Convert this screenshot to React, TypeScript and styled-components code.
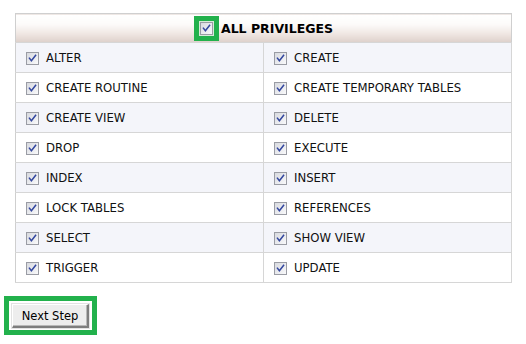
import styled, { createGlobalStyle } from "styled-components";

const privileges: [string, string][] = [
  ["ALTER", "CREATE"],
  ["CREATE ROUTINE", "CREATE TEMPORARY TABLES"],
  ["CREATE VIEW", "DELETE"],
  ["DROP", "EXECUTE"],
  ["INDEX", "INSERT"],
  ["LOCK TABLES", "REFERENCES"],
  ["SELECT", "SHOW VIEW"],
  ["TRIGGER", "UPDATE"],
];

const GlobalStyle = createGlobalStyle`
  body {
    margin: 0;
    background: #ffffff;
    font-family: "DejaVu Sans", Verdana, sans-serif;
  }
`;

const Page = styled.div`
  padding: 13px 0 0 4px;
`;

const Table = styled.table`
  margin-left: 11px;
  width: 497px;
  border-collapse: collapse;
  border: 1px solid #cfcfcf;
  table-layout: fixed;
`;

const HeaderCell = styled.th`
  height: 28px;
  padding: 0;
  background: linear-gradient(
    to bottom,
    #ffffff 0%,
    #fcfbfa 35%,
    #efe6e2 70%,
    #ddd0ca 100%
  );
  border-bottom: 1px solid #d6d6d6;
`;

const HeaderInner = styled.div`
  display: flex;
  align-items: center;
  justify-content: center;
  gap: 2px;
  font-size: 12.5px;
  font-weight: bold;
  color: #000;
`;

const Highlight = styled.span`
  display: inline-flex;
  padding: 5px;
  background: #22b14c;
`;

const Row = styled.tr<{ $shaded: boolean }>`
  height: 30px;
  background: ${(p) => (p.$shaded ? "#f4f5fa" : "#ffffff")};
  border-bottom: 1px solid #d6d6d6;
`;

const Cell = styled.td`
  padding: 1px 0 0 10px;
  border-right: 1px solid #d6d6d6;
  font-size: 11.7px;
  color: #111;
  vertical-align: middle;
`;

const CellInner = styled.div`
  display: flex;
  align-items: center;
  gap: 7px;
`;

const Footer = styled.div`
  margin-top: 13px;
  display: inline-flex;
  border: 5px solid #22b14c;
  padding: 3px 3px 2px 3px;
`;

const Button = styled.button`
  width: 77px;
  height: 24px;
  padding: 0;
  font-family: "DejaVu Sans", Verdana, sans-serif;
  font-size: 11.5px;
  color: #000;
  background: #ededed;
  border-style: solid;
  border-width: 1px 2px 2px 1px;
  border-color: #ffffff #7d7d7d #7d7d7d #ffffff;
  box-shadow: inset -1px -1px 0 #b8b8b8, 0 0 0 1px #e2e2e2;
`;

const Check = ({ halo }: { halo?: boolean }) => (
  <svg
    width={halo ? 15 : 13}
    height={halo ? 15 : 13}
    viewBox={halo ? "-1 -1 15 15" : "0 0 13 13"}
    style={{ display: "block", flexShrink: 0 }}
  >
    <defs>
      <linearGradient id="cbfill" x1="0" y1="0" x2="1" y2="1">
        <stop offset="0" stopColor="#d6d8de" />
        <stop offset="1" stopColor="#fbfbfc" />
      </linearGradient>
    </defs>
    {halo && <rect x="-1" y="-1" width="15" height="15" fill="#d7ead9" />}
    <rect x="0.5" y="0.5" width="12" height="12" fill="url(#cbfill)" stroke="#9a9ca4" />
    <path
      d="M3.4 6.2 L5.4 8.8 L9.6 3.4"
      fill="none"
      stroke="#33479f"
      strokeWidth="1.5"
      strokeLinecap="square"
    />
  </svg>
);

export default function App() {
  return (
    <>
      <GlobalStyle />
      <Page>
        <Table>
          <thead>
            <tr>
              <HeaderCell colSpan={2}>
                <HeaderInner>
                  <Highlight>
                    <Check halo />
                  </Highlight>
                  ALL PRIVILEGES
                </HeaderInner>
              </HeaderCell>
            </tr>
          </thead>
          <tbody>
            {privileges.map(([a, b], i) => (
              <Row key={a} $shaded={i % 2 === 0}>
                <Cell>
                  <CellInner>
                    <Check />
                    {a}
                  </CellInner>
                </Cell>
                <Cell>
                  <CellInner>
                    <Check />
                    {b}
                  </CellInner>
                </Cell>
              </Row>
            ))}
          </tbody>
        </Table>
        <Footer>
          <Button>Next Step</Button>
        </Footer>
      </Page>
    </>
  );
}
